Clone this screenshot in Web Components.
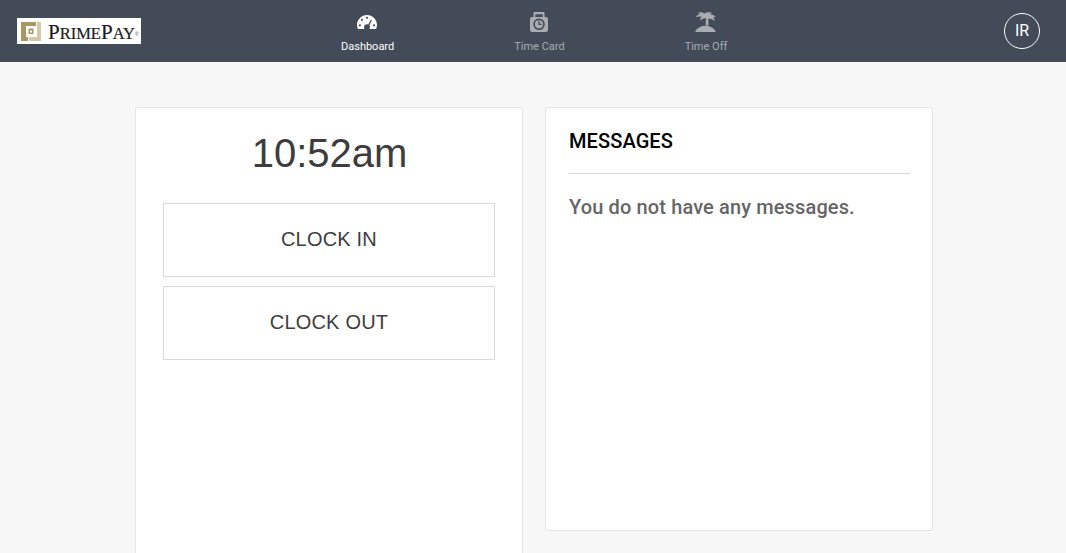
<!DOCTYPE html>
<html lang="en">
<head>
<meta charset="utf-8">
<title>Dashboard</title>
<style>
  html, body { margin: 0; height: 553px; overflow: hidden; background: #f7f7f7; }
  body { display: flex; flex-direction: column; font-family: Roboto, sans-serif; }
</style>
</head>
<body>
<app-header>
  <prime-logo slot="logo"></prime-logo>
  <nav-item active label="Dashboard">
    <svg viewBox="0 0 20 14" width="20" height="14" style="margin-left:-1px"><path fill="currentColor" fill-rule="evenodd" d="M1 14C.4 12.800 0 11.500 0 10 0 4.500 4.500 0 10 0s10 4.500 10 10c0 1.500-.4 2.800-1 4H12.300c.5-.5.7-1.100.7-1.800 0-.7-.2-1.300-.7-1.800L15 5.300 14 4.700 11.200 9.500c-.4-.2-.8-.3-1.200-.3-1.700 0-3 1.300-3 3 0 .7.200 1.300.7 1.800ZM10 1.700a1.100 1.100 0 1 0 0 2.200 1.100 1.100 0 0 0 0-2.200ZM5 3.700a1.100 1.100 0 1 0 0 2.200 1.100 1.100 0 0 0 0-2.200ZM2.900 9.200a1.100 1.100 0 1 0 0 2.200 1.100 1.100 0 0 0 0-2.200ZM17.100 9.200a1.100 1.100 0 1 0 0 2.200 1.100 1.100 0 0 0 0-2.200Z"/></svg>
  </nav-item>
  <nav-item label="Time Card">
    <svg viewBox="0 0 18 20" width="18" height="20"><path fill="currentColor" fill-rule="evenodd" d="M4.500 0h9c.6 0 1 .4 1 1v4H16c1.200 0 2 .9 2 2v11c0 1.200-.8 2-2 2H2c-1.200 0-2-.8-2-2V7c0-1.100.8-2 2-2h1.500V1c0-.6.400-1 1-1ZM5.300 2.200V5h7.400V2.200ZM9 6.500a5.800 5.800 0 1 0 0 11.600A5.800 5.800 0 0 0 9 6.500ZM9 8.200a4.100 4.100 0 1 1 0 8.200 4.100 4.100 0 0 1 0-8.200ZM8.300 9.300v3.700h3.300v-1.300H9.600V9.300Z"/></svg>
  </nav-item>
  <nav-item label="Time Off">
    <svg viewBox="0 0 21 20" width="21" height="20"><path fill="currentColor" d="M3 .8C5 0 7.500.2 9.500 1.500 11.500.2 14.500-.2 17 .8c-.8.4-1.300.8-1.700 1.400 2 .1 4 1 5.200 2.800-1 .1-1.700.2-2.300.5.900.9 1.400 2 1.400 3.500-1.500-1.200-3-2-4.800-2.300l-1.400-.2c-.1 1.600 0 4 .3 6.700l-3 0c-.1-2.600.1-4.900.5-6.800-2-.2-4 .5-5.800 2-.3-1.300.1-2.600 1-3.600C5 4.300 3.300 4.400 1 5.300 1.500 3.500 3 2.400 5 2 4.500 1.500 3.800 1 3 .8ZM10.500 13.800c4.700 0 8.700 2.300 10.300 6.200H.2c1.600-3.900 5.600-6.200 10.300-6.200Z"/></svg>
  </nav-item>
  <user-badge slot="user">IR</user-badge>
</app-header>
<dash-board>
  <dash-card slot="left" open-end><clock-panel time="10:52am"></clock-panel></dash-card>
  <dash-card slot="right"><messages-panel>You do not have any messages.</messages-panel></dash-card>
</dash-board>

<script>
class AppHeader extends HTMLElement {
  constructor() {
    super();
    this.attachShadow({ mode: 'open' }).innerHTML = `
      <style>
        :host { display: flex; flex: none; align-items: center; height: 62px; background: #434a58; padding: 0 26px 0 17px; }
        nav { display: flex; gap: 120px; margin-left: 200px; height: 100%; }
        .user { margin-left: auto; display: flex; }
      </style>
      <slot name="logo"></slot>
      <nav><slot></slot></nav>
      <div class="user"><slot name="user"></slot></div>`;
  }
}

class PrimeLogo extends HTMLElement {
  constructor() {
    super();
    this.attachShadow({ mode: 'open' }).innerHTML = `
      <style>
        :host { display: flex; align-items: center; box-sizing: border-box; width: 124px; height: 26px; padding-left: 4px; background: #fff; }
        svg { flex: none; margin: 1px 7px 0 0; }
        .word { font: 21px/1 "Liberation Serif", serif; color: #1c1c1c; white-space: nowrap; margin-top: 2px; -webkit-text-stroke: .2px #1c1c1c; }
        .sm { font-size: 16.500px; }
        .reg { font: 5px/1 "Liberation Sans", sans-serif; color: #555; margin: 6px 0 0 0; }
      </style>
      <svg viewBox="0 0 20 19" width="20" height="19">
        <path fill="#a89663" d="M0 0H15V4H5V15H7V19H0Z"/>
        <path fill="#d3c8aa" d="M16 0H20V19H8V15H16Z"/>
        <path fill="#a89663" d="M7.500 6.500H12.500V12H7.500Z"/>
        <path fill="#fff" d="M9 8.500H11V10.500H9Z"/>
      </svg>
      <span class="word">P<span class="sm">RIME</span>P<span class="sm">AY</span></span><span class="reg">®</span>`;
  }
}

class NavItem extends HTMLElement {
  static get observedAttributes() { return ['label']; }
  constructor() {
    super();
    this.attachShadow({ mode: 'open' }).innerHTML = `
      <style>
        :host { display: flex; flex-direction: column; align-items: center; height: 100%; color: #a9acb2; }
        :host([active]) { color: #fff; }
        .icon { display: flex; align-items: center; height: 22px; margin-top: 11px; }
        .label { margin-top: 7px; font: 11px/14px Roboto, sans-serif; white-space: nowrap; }
      </style>
      <div class="icon"><slot></slot></div>
      <div class="label"></div>`;
  }
  attributeChangedCallback(name, old, value) {
    this.shadowRoot.querySelector('.label').textContent = value;
  }
}

class UserBadge extends HTMLElement {
  constructor() {
    super();
    this.attachShadow({ mode: 'open' }).innerHTML = `
      <style>
        :host { display: flex; align-items: center; justify-content: center; box-sizing: border-box; width: 36px; height: 36px; border: 1px solid #fff; border-radius: 50%; color: #fff; font: 16px/1 Roboto, sans-serif; }
      </style>
      <slot></slot>`;
  }
}

class DashBoard extends HTMLElement {
  constructor() {
    super();
    this.attachShadow({ mode: 'open' }).innerHTML = `
      <style>
        :host { display: flex; flex: 1; min-height: 0; align-items: flex-start; gap: 22px; padding: 45px 133px 0 135px; }
        ::slotted(*) { width: 388px; }
      </style>
      <slot name="left"></slot>
      <slot name="right"></slot>`;
  }
}

class DashCard extends HTMLElement {
  constructor() {
    super();
    this.attachShadow({ mode: 'open' }).innerHTML = `
      <style>
        :host { display: block; box-sizing: border-box; height: 424px; background: #fff; border: 1px solid #e4e4e4; border-radius: 3px; }
        /* left card runs off the bottom of the window */
        :host([open-end]) { height: 446px; border-bottom: 0; border-radius: 3px 3px 0 0; }
      </style>
      <slot></slot>`;
  }
}

class ClockPanel extends HTMLElement {
  constructor() {
    super();
    this.attachShadow({ mode: 'open' }).innerHTML = `
      <style>
        :host { display: flex; flex-direction: column; padding: 0 27px; font-family: "Liberation Sans", Arial, sans-serif; color: #3d3d3d; }
        .time { font-size: 40px; line-height: 46px; text-align: center; margin: 22px 0 27px; padding-left: 1px; }
        .actions { display: flex; flex-direction: column; gap: 9px; }
        button { height: 74px; padding: 0 0 2px; background: #fff; border: 1px solid #d9d9d9; color: inherit; font: 20px "Liberation Sans", Arial, sans-serif; letter-spacing: .2px; }
      </style>
      <div class="time"></div>
      <div class="actions">
        <button>CLOCK IN</button>
        <button>CLOCK OUT</button>
      </div>`;
  }
  connectedCallback() {
    this.shadowRoot.querySelector('.time').textContent = this.getAttribute('time');
  }
}

class MessagesPanel extends HTMLElement {
  constructor() {
    super();
    this.attachShadow({ mode: 'open' }).innerHTML = `
      <style>
        :host { display: block; padding: 0 22px 0 23px; font-family: Roboto, sans-serif; }
        h2 { margin: 0; padding: 21px 0 20px; border-bottom: 1px solid #d9d9d9; font-size: 20px; line-height: 24px; font-weight: 500; letter-spacing: .1px; color: #000; }
        p { margin: 21px 0 0; font-size: 20px; line-height: 24px; font-weight: 500; letter-spacing: .13px; color: #666; }
      </style>
      <h2>MESSAGES</h2>
      <p><slot></slot></p>`;
  }
}

customElements.define('app-header', AppHeader);
customElements.define('prime-logo', PrimeLogo);
customElements.define('nav-item', NavItem);
customElements.define('user-badge', UserBadge);
customElements.define('dash-board', DashBoard);
customElements.define('dash-card', DashCard);
customElements.define('clock-panel', ClockPanel);
customElements.define('messages-panel', MessagesPanel);
</script>
</body>
</html>
